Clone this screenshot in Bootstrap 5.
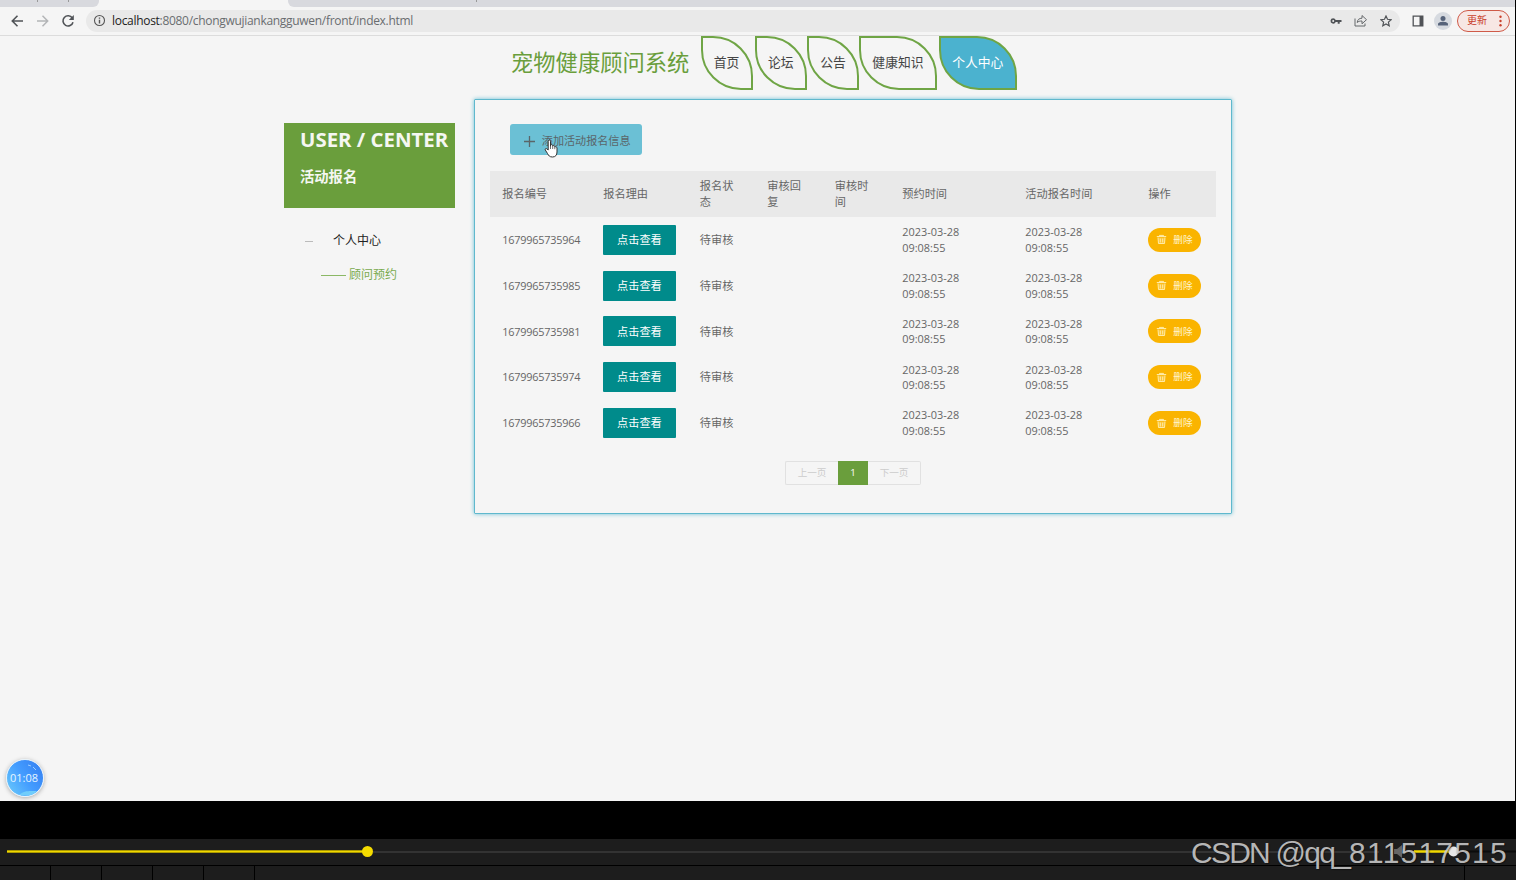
<!DOCTYPE html>
<html lang="zh-CN">
<head>
<meta charset="utf-8">
<meta name="viewport" content="width=device-width, initial-scale=1">
<title>宠物健康顾问系统</title>
<link href="https://cdn.jsdelivr.net/npm/bootstrap@5.3.0/dist/css/bootstrap.min.css" rel="stylesheet">
<style>
:root{--leaf:#6a9e3c;--sky:#4bb2cf}
body{width:1516px;height:880px;overflow:hidden;background:#000;color:#666;font:11.2px/15.7px "Open Sans","Noto Sans CJK SC",sans-serif}
svg{display:block;flex:none}
.screen{width:1515px;height:801px;background:#f5f5f5}
/* browser chrome */
.tabstrip{height:7px;background:#f5f5f5}
.tab-off{background:#d8d9de;position:relative}
.tab-off i{position:absolute;top:0;width:1px;height:2px;background:#999}
.tab-l{width:99px;border-bottom-right-radius:6px}
.tab-r{width:1227px;border-bottom-left-radius:6px}
.toolbar{height:29px;border-bottom:1px solid #dcdcdc;padding:0 5px 1px 11px}
.omnibox{height:22px;width:1315px;margin-left:10px;border-radius:11px;background:#e9e9e9;padding:0 7px;color:#6a6d70;font-size:12px}
.omnibox b{font-weight:400;color:#222}
.url{margin-left:6px;letter-spacing:-.3px}
.update{width:53px;height:22px;border:1px solid #cf5a48;border-radius:11px;background:#f7e7e4;color:#c9402c;font-size:10px;padding:0 7px 0 9px}
/* site header */
.site-head{height:54px;padding-left:511px}
.brand-name{font-size:22.3px;line-height:54px;color:var(--leaf);width:189.500px;white-space:nowrap}
.leaf{height:54px;border:2px solid #6fa545;border-radius:0 40px 0 40px;color:#444;font-size:12.8px;width:52.200px;white-space:nowrap}
.leaf-wide{width:77.800px}
.leaf.active{background:var(--sky);color:#fff}
/* page */
.page{padding:9px 0 0 284px}
.side{width:171px;padding-top:24px}
.side-title{height:85px;background:var(--leaf);color:#f5f7f2;padding:3px 0 0 16px}
.side-title h2{font-size:20.4px;line-height:26px;font-weight:700;margin:0;white-space:nowrap}
.side-title h3{font-size:14.3px;line-height:20px;font-weight:700;margin:15px 0 0}
.side-menu{font-size:12px;line-height:34px;padding-top:16px;color:#222}
.side-menu .dash{width:8px;height:1px;background:#bbb;margin:0 20px 0 21px}
.side-menu .sub{color:#7aab50}
.side-menu .line{width:25px;height:1px;background:#8bb865;margin:0 3px 0 37px}
.panel{width:758.5px;height:415px;margin-left:18.800px;border:1px solid #5fb8cd;box-shadow:0 0 4px #6cc0d5;padding:24px 15.5px 0 15.500px;border-radius:1px}
.add-btn{width:132px;height:31px;margin-left:19.5px;background:#6bc0d5;color:#5a6569;border-radius:3px;padding:3px 0 0 14px;font-size:11.1px;line-height:28px;position:relative}
.hand{position:absolute;left:34px;top:15px}
.reg{width:725.5px;margin:16px 0 0;table-layout:fixed;border-collapse:collapse}
.reg th,.reg td{height:45.8px;padding:.4px 12px 0;font-weight:400;vertical-align:middle}
.reg .num{font-size:10.9px;letter-spacing:-.24px}
.reg .time{padding-right:40px;font-size:10.9px}
.reg thead{background:#e9e9e9}
.view{width:73px;height:30px;margin-left:-.4px;background:#008b8b;color:#fff;border-radius:1px;font-size:11.2px}
.del{width:53px;height:24px;margin-left:-.4px;border-radius:12px;background:#fab400;color:#fff4cf;font-size:9.6px}
.pager{height:24px;margin-top:15.4px;font-size:9.6px;color:#ccc}
.pager>span{width:53px;border:1px solid #e1e1e1}
.pager>span:first-child{border-right:0;border-radius:2px 0 0 2px}
.pager>span:last-child{border-left:0;border-radius:0 2px 2px 0}
.pager>b{width:30px;background:var(--leaf);color:#fff;font-weight:400}
/* recorder badge and player */
.clock{position:absolute;left:6px;top:759px;width:38px;height:38px;border-radius:50%;border:1px solid #e6f2fb;background:linear-gradient(55deg,#62c1fb 12%,#439cff 50%,#347df0);box-shadow:0 1px 4px #aaa;color:#e6f5ff;font-size:11px;overflow:hidden}
.clock svg{position:absolute;inset:0}
.clock span{left:-1px}
.player{height:41px;margin-top:38px;background:#1d1d1d;position:relative}
.seek{height:25px;padding-left:7px}
.done{width:356px;height:3px;background:#f0d800;border:solid #ab9a00;border-width:1px 0}
.knob{width:11px;height:11px;border-radius:50%;background:#f5dc00;margin-left:-1px}
.rest{width:1006px;height:2px;background:#333}
.cells{height:15px;border-top:1px solid #000;margin-top:1px}
.cells i{width:51px;border-right:1px solid #000}
.vol{position:absolute;left:1394px;top:5px}
.wm{position:absolute;left:1191px;top:835px;font:30px/36px "Liberation Sans",sans-serif;letter-spacing:-1.75px;color:rgba(205,205,205,.88);text-shadow:1px 1px 1px rgba(0,0,0,.35);white-space:nowrap}
.wm span{letter-spacing:1.2px}
</style>
<script src="https://cdn.jsdelivr.net/npm/bootstrap@5.3.0/dist/js/bootstrap.bundle.min.js"></script>
</head>
<body class="position-relative">
<div class="screen">
  <div class="tabstrip d-flex justify-content-between"><div class="tab-off tab-l"><i style="left:37px"></i><i style="left:68px"></i></div><div class="tab-off tab-r"><i style="left:188px"></i></div></div>
  <div class="toolbar d-flex align-items-center">
    <svg width="13" height="14" viewBox="0 0 13 14" fill="none" stroke="#505357" stroke-width="1.6"><path d="M12 7H1.5M6.5 1.8 1.3 7l5.2 5.2"/></svg>
    <svg class="ms-2 me-2" width="25" height="14" viewBox="0 0 25 14" fill="none" stroke="#b3b5b7" stroke-width="1.5"><path d="M5 7h10.500M10.500 1.800 15.700 7l-5.200 5.200"/></svg>
    <svg style="margin-left:-4px;margin-right:1px" width="14" height="14" viewBox="0 0 14 14" fill="none" stroke="#505357" stroke-width="1.6"><path d="M11.300 4A5.100 5.100 0 1 0 12 8.200"/><path d="M12.800 1v5H7.800z" fill="#505357" stroke="none"/></svg>
    <div class="omnibox d-flex align-items-center">
      <svg width="13" height="13" viewBox="0 0 13 13" fill="none" stroke="#555" stroke-width="1.1"><circle cx="6.500" cy="6.500" r="5"/><path d="M6.500 5.700v3.700M6.500 3.500v1.200" stroke-width="1.400"/></svg>
      <span class="url me-auto"><b>localhost</b>:8080/chongwujiankangguwen/front/index.html</span>
      <svg width="12" height="12" viewBox="0 0 12 12"><path d="M3.200 3.200a2.700 2.700 0 1 0 2.500 3.700h2v1.900h2V6.900h1.800V5H5.700a2.700 2.700 0 0 0-2.500-1.800m0 1.800a1 1 0 1 1 0 2 1 1 0 0 1 0-2" fill="#505357" fill-rule="evenodd"/></svg>
      <svg style="margin:0 13px 0 12px" width="13" height="13" viewBox="0 0 13 13" fill="none" stroke="#65686b"><path d="M1 4.500v7.500h10v-2.500M3.200 8.500c.3-3 2-4.200 4.800-4.300V1.500l4.500 4.200L8 9.800V7C5.800 7 4.400 7.300 3.200 8.500z"/></svg>
      <svg style="margin-right:1px" width="12" height="12" viewBox="0 0 12 12" fill="none" stroke="#505357" stroke-width="1.200"><path d="m6 1 1.500 3.300 3.600.4-2.700 2.400.8 3.600L6 8.900l-3.200 1.800.8-3.600L.9 4.700l3.600-.4z"/></svg>
    </div>
    <svg style="margin-left:12px" width="12" height="12" viewBox="0 0 12 12"><path d="M1.200 1.200h9.600v9.600H1.200z" fill="none" stroke="#505357" stroke-width="1.300"/><path d="M7.500 1h3.500v10H7.500z" fill="#505357"/></svg>
    <svg style="margin:0 5px 0 10px" width="18" height="18" viewBox="0 0 18 18"><circle cx="9" cy="9" r="9" fill="#d6dae0"/><circle cx="9" cy="6.400" r="2.500" fill="#56637a"/><path d="M4 13.500v-1.300C4 10.500 7 9.800 9 9.800s5 .7 5 2.400v1.300z" fill="#56637a"/></svg>
    <div class="update d-flex align-items-center justify-content-between"><span>更新</span><svg width="3" height="12" viewBox="0 0 3 12" fill="#c9402c"><circle cx="1.500" cy="1.800" r="1.200"/><circle cx="1.500" cy="6" r="1.200"/><circle cx="1.500" cy="10.200" r="1.200"/></svg></div>
  </div>
  <header class="site-head d-flex">
    <div class="brand-name">宠物健康顾问系统</div>
    <nav class="d-flex">
      <a class="leaf d-flex align-items-center justify-content-center text-decoration-none">首页</a>
      <a class="leaf d-flex align-items-center justify-content-center text-decoration-none" style="margin-left:2px">论坛</a>
      <a class="leaf d-flex align-items-center justify-content-center text-decoration-none" style="margin-left:0">公告</a>
      <a class="leaf leaf-wide d-flex align-items-center justify-content-center text-decoration-none" style="margin-left:0">健康知识</a>
      <a class="leaf leaf-wide active d-flex align-items-center justify-content-center text-decoration-none" style="margin-left:2px">个人中心</a>
    </nav>
  </header>
  <main class="page d-flex">
    <aside class="side">
      <div class="side-title"><h2>USER / CENTER</h2><h3>活动报名</h3></div>
      <div class="side-menu">
        <div class="d-flex align-items-center"><span class="dash"></span>个人中心</div>
        <div class="sub d-flex align-items-center"><span class="line"></span>顾问预约</div>
      </div>
    </aside>
    <section class="panel">
      <div class="add-btn d-flex align-items-center"><svg width="11" height="11" viewBox="0 0 11 11" stroke="#5a6569" stroke-width="1.300"><path d="M5.500 0v11M0 5.500h11"/></svg><span style="margin-left:7px">添加活动报名信息</span>
        <svg class="hand" width="15" height="19" viewBox="0 0 15 19" fill="#fff" stroke="#333" stroke-linejoin="round"><path d="M4.200 11V2.200c0-1.600 2.300-1.600 2.300 0v5-1c.5-.9 2-.7 2.200.4V7c.6-.8 2-.5 2.100.6V8c.7-.7 2.200-.3 2.200 1v4c0 3-1.500 5-4.500 5-3 0-3.800-1.300-5-3.500L1.300 11c-.6-1.300.8-2 1.700-1z"/><path d="M6.500 7v3M8.700 7v3M10.800 8v2.200" fill="none" stroke-width=".7"/></svg>
      </div>
      <table class="reg">
        <colgroup><col style="width:101px"><col style="width:96.500px"><col style="width:67.500px"><col style="width:67.500px"><col style="width:67.500px"><col style="width:123px"><col style="width:123px"><col style="width:79.500px"></colgroup>
        <thead><tr><th>报名编号</th><th>报名理由</th><th>报名状态</th><th>审核回复</th><th>审核时间</th><th>预约时间</th><th>活动报名时间</th><th>操作</th></tr></thead>
        <tbody id="rows"></tbody>
      </table>
      <div class="pager d-flex justify-content-center"><span class="d-flex align-items-center justify-content-center">上一页</span><b class="d-flex align-items-center justify-content-center">1</b><span class="d-flex align-items-center justify-content-center">下一页</span></div>
    </section>
  </main>
</div>
<div class="clock d-flex align-items-center justify-content-center"><svg width="36" height="36" viewBox="0 0 36 36"><path d="M12 35c5-5 11-4 18-4l-4 5z" fill="#70cdfb"/><path d="m21 5 3 1M26 7l3 3" stroke="#9cceff" fill="none"/></svg><span class="position-relative">01:08</span></div>
<div class="player">
  <div class="seek d-flex align-items-center"><div class="done"></div><div class="knob"></div><div class="rest"></div></div>
  <div class="cells d-flex"><i></i><i></i><i></i><i></i><i></i><i class="flex-grow-1" style="max-width:1210px"></i></div>
  <svg class="vol" width="122" height="16" viewBox="0 0 122 16"><path d="M0 5h3l5-4v13l-5-4H0z" fill="#666"/><path d="M10 5v5" stroke="#555"/><path d="M20 7.500h40" stroke="#f0d800" stroke-width="2.500"/><path d="M60 7.500h62" stroke="#0b0b0b" stroke-width="2"/><circle cx="59.500" cy="7.500" r="5" fill="#e6e6e6"/></svg>
</div>
<div class="wm">CSDN @qq_<span>811517515</span></div>
<script>
const ids=['1679965735964','1679965735985','1679965735981','1679965735974','1679965735966'];
const bin='<svg width="11" height="11" viewBox="0 0 11 11" fill="#ffe9a0" fill-opacity=".35" stroke="#fff0b8" stroke-width=".9"><path d="M.8 2.500h9.400M3.500 2.300V1.400h4v.9M2 3.500l.5 6h6L9 3.500M4.300 4.500v4M6.700 4.500v4"/></svg>';
document.getElementById('rows').innerHTML=ids.map(id=>`<tr><td class="num">${id}</td><td><div class="view d-flex align-items-center justify-content-center">点击查看</div></td><td>待审核</td><td></td><td></td><td class="time">2023-03-28 09:08:55</td><td class="time">2023-03-28 09:08:55</td><td><div class="del d-flex align-items-center justify-content-center">${bin}<span style="margin-left:6px">删除</span></div></td></tr>`).join('');
</script>
</body>
</html>
